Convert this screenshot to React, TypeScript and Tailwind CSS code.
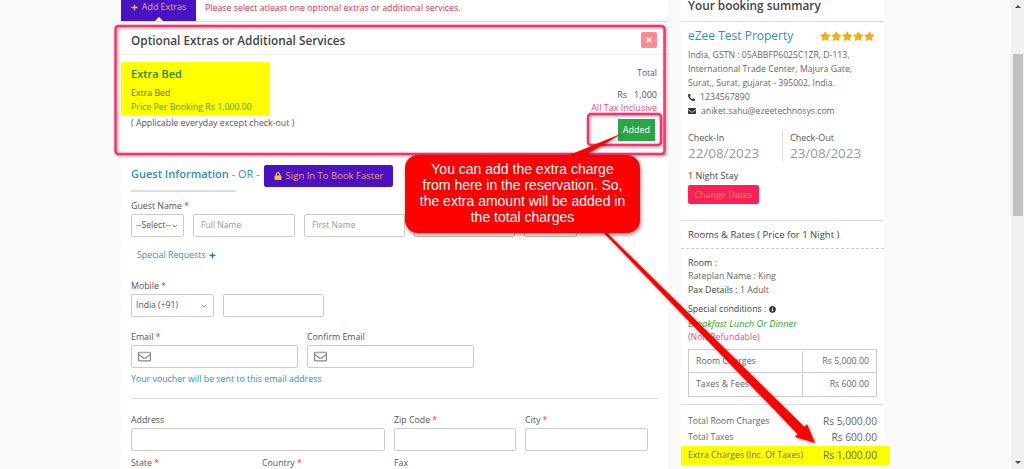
import { FaPlus, FaLock, FaTimes, FaRegEnvelope, FaEnvelope, FaPhoneAlt, FaInfoCircle, FaStar } from "react-icons/fa";
import { ChevronDown } from "lucide-react";

const Req = () => <span className="text-[#e33]"> *</span>;

function Label({ text, req }: { text: string; req?: boolean }) {
  return (
    <div className="h-[16px] whitespace-nowrap pt-[1px] text-[8.8px] leading-[14px] text-[#555]">
      {text}
      {req && <Req />}
    </div>
  );
}

function Field({ label, req, w, ph, icon }: { label?: string; req?: boolean; w: string; ph?: string; icon?: boolean }) {
  return (
    <div className={w}>
      {label && <Label text={label} req={req} />}
      <div className={`flex h-[23px] items-center rounded-[2px] border border-[#ccc] bg-white text-[8.6px] text-[#999] ${icon ? "px-[6px]" : "px-[7px]"}`}>
        {icon && <FaRegEnvelope size={13} className="text-[#888]" />}
        {ph}
      </div>
    </div>
  );
}

function Sel({ w, text }: { w: string; text: string }) {
  return (
    <div className={`${w} flex h-[23px] items-center justify-between whitespace-nowrap rounded-[2px] border border-[#ccc] bg-white pl-[4px] pr-[5px] text-[8.6px] text-[#555]`}>
      {text}
      <ChevronDown size={8} className="shrink-0 text-[#555]" />
    </div>
  );
}

function Row({ a, b, bg }: { a: string; b: string; bg?: boolean }) {
  return (
    <div className={`flex items-center justify-between pl-[7px] ${bg ? "h-[19px] w-[209px] bg-[#ffff00] pr-[13px]" : "h-[16px] pr-[7px]"}`}>
      <span className="whitespace-nowrap text-[8.7px] text-[#666]">{a}</span>
      <span className="whitespace-nowrap text-[10.2px] text-[#666]">{b}</span>
    </div>
  );
}

export default function App() {
  return (
    <div className="relative flex h-[469px] w-[1024px] overflow-hidden bg-[#fafafa] font-['Open_Sans',sans-serif] text-[#555]">
      <div className="ml-[121px] h-full w-[547px] bg-white">
        <div className="flex h-[22px] items-start border-b border-[#ddd]">
          <div className="relative flex h-[21px] w-[75px] items-center justify-center gap-[4px] bg-[#4a12c4] pb-[8px] pt-[1px] text-[8.9px] text-[#e9b25e]">
            <FaPlus size={7} className="text-[#f5c02e]" />
            Add Extras
            <span className="absolute bottom-0 left-[34px] h-0 w-0 border-x-[4px] border-b-[4px] border-x-transparent border-b-white" />
          </div>
          <div className="ml-[9px] pt-[2px] text-[8.8px] leading-[13px] text-[#d9304f]">
            Please select atleast one optional extras or additional services.
          </div>
        </div>

        <div className="mt-[4px] h-[128px]">
          <div className="flex h-[29px] items-center justify-between border-b border-[#eee] pl-[10px] pr-[11px]">
            <span className="mt-[1px] text-[11.8px] font-semibold text-[#444]">Optional Extras or Additional Services</span>
            <span className="flex h-[16px] w-[16px] items-center justify-center rounded-[2px] bg-[#ff8a8f]">
              <FaTimes size={8} className="text-white" />
            </span>
          </div>
          <div className="flex justify-between pr-[11px] pt-[7px]">
            <div>
              <div className="h-[53px] w-[149px] bg-[#ffff00] pl-[10px] pt-[4px]">
                <div className="text-[11px] font-semibold leading-[16px] text-[#1f8a00]">Extra Bed</div>
                <div className="mt-[4px] text-[8.8px] leading-[14px] text-[#6a6a00]">Extra Bed</div>
                <div className="text-[8.8px] leading-[15px] text-[#3fa300]">Price Per Booking Rs 1,000.00</div>
              </div>
              <div className="pl-[10px] pt-[1px] text-[8.8px] leading-[14px] text-[#555]">( Applicable everyday except check-out )</div>
            </div>
            <div className="flex flex-col items-end pt-[4px]">
              <div className="text-[8.5px] leading-[14px] text-[#555]">Total</div>
              <div className="mt-[8px] text-[9px] leading-[13px] text-[#555]">Rs &nbsp; 1,000</div>
              <div className="text-[9px] leading-[14px] text-[#f0506e]">All Tax Inclusive</div>
              <div className="mr-[2px] mt-[4px] flex h-[22px] w-[37px] items-center justify-center bg-[#28a745] text-[9px] text-white">Added</div>
            </div>
          </div>
        </div>

        <div className="border-t border-[#ddd] pl-[10px] pr-[10px]">
          <div className="flex h-[37px] items-start pt-[10px]">
            <div className="w-[133px] whitespace-nowrap pt-[1px] text-[11px] leading-[16px] text-[#2f8fc4]">
              <span className="font-semibold">Guest Information</span>
              <span> - OR -</span>
            </div>
            <div className="flex h-[22px] w-[129px] items-center justify-center gap-[4px] rounded-[2px] bg-[#4a12c4] text-[9.5px] text-[#e9a05e]">
              <FaLock size={8} className="text-[#f5c02e]" />
              Sign In To Book Faster
            </div>
          </div>
          <div className="-mt-[2px] h-[2px] w-[105px] bg-[#ddd]" />
          <div className="h-[20px] pt-[7px] text-[8.8px] leading-[14px] text-[#555]">
            Guest Name<Req />
          </div>
          <div className="mt-[2px] flex gap-[9px]">
            <Sel w="w-[53px]" text="--Select--" />
            <Field w="w-[102px]" ph="Full Name" />
            <Field w="w-[101px]" ph="First Name" />
            <Field w="w-[101px]" ph="Last Name" />
            <Field w="w-[53px]" />
          </div>
          <div className="flex h-[36px] items-center gap-[3px] pl-[6px] pt-[1px] text-[8.8px] text-[#2f8fc4]">
            Special Requests
            <FaPlus size={7} className="text-[#1a7fc0]" />
          </div>
          <div className="mt-[5px]">
            <Label text="Mobile" req />
          </div>
          <div className="flex gap-[9px]">
            <Sel w="w-[83px]" text="India (+91)" />
            <Field w="w-[101px]" />
          </div>
          <div className="mt-[12px] flex gap-[9px]">
            <Field w="w-[167px]" label="Email" req icon />
            <Field w="w-[167px]" label="Confirm Email" icon />
          </div>
          <div className="flex h-[22px] items-center pt-[2px] text-[8.8px] text-[#2f8fc4]">Your voucher will be sent to this email address</div>
          <div className="mt-[8px] h-[1px] bg-[#ddd]" />
          <div className="mt-[13px] flex gap-[9px]">
            <Field w="w-[254px]" label="Address" />
            <Field w="w-[122px]" label="Zip Code" req />
            <Field w="w-[123px]" label="City" req />
          </div>
          <div className="mt-[5px] flex text-[8.8px] leading-[14px] text-[#555]">
            <div className="w-[131px]">State<Req /></div>
            <div className="w-[132px]">Country<Req /></div>
            <div>Fax</div>
          </div>
        </div>
      </div>

      <div className="ml-[13px] h-full w-[203px] bg-white">
        <div className="h-[22px] border-b border-[#ddd] pl-[7px] text-[11.8px] font-semibold leading-[11px] text-[#444]">Your booking summary</div>
        <div className="h-[199px] border-b border-[#ddd] pl-[7px] pr-[10px] pt-[5px]">
          <div className="flex h-[17px] items-center justify-between">
            <span className="text-[12px] text-[#2f8fc4]">eZee Test Property</span>
            <span className="flex gap-[0.5px] pt-[2px]">
              {[0, 1, 2, 3, 4].map((i) => (
                <FaStar key={i} size={10.5} className="text-[#f5ad0c]" />
              ))}
            </span>
          </div>
          <div className="mt-[4px] text-[8.7px] leading-[14px] text-[#666]">
            <div className="whitespace-nowrap">India, GSTN : 05ABBFP6025C1ZR, D-113,</div>
            <div className="whitespace-nowrap">International Trade Center, Majura Gate,</div>
            <div className="whitespace-nowrap">Surat,, Surat, gujarat - 395002, India.</div>
            <div className="flex items-center gap-[5px]"><FaPhoneAlt size={7} className="text-[#333]" />1234567890</div>
            <div className="flex items-center gap-[5px]"><FaEnvelope size={8} className="text-[#333]" />aniket.sahu@ezeetechnosys.com</div>
          </div>
          <div className="mt-[13px] flex">
            <div className="w-[95px] border-r border-[#ddd]">
              <div className="text-[9px] leading-[14px] text-[#555]">Check-In</div>
              <div className="text-[13.4px] leading-[16px] text-[#999]">22/08/2023</div>
            </div>
            <div className="pl-[7px]">
              <div className="text-[9px] leading-[14px] text-[#555]">Check-Out</div>
              <div className="text-[13.4px] leading-[16px] text-[#999]">23/08/2023</div>
            </div>
          </div>
          <div className="mt-[8px] text-[9px] leading-[14px] text-[#444]">1 Night Stay</div>
          <div className="mt-[2px] flex h-[19px] w-[71px] items-center justify-center rounded-[2px] bg-[#ff1f58] text-[9px] text-[#f5a623]">Change Dates</div>
        </div>
        <div className="flex h-[28px] items-center border-b border-dashed border-[#ccc] pl-[7px] pt-[1px] text-[9.5px] text-[#444]">Rooms &amp; Rates ( Price for 1 Night )</div>
        <div className="h-[156px] border-b border-[#ddd] pl-[7px] pr-[7px] pt-[8px] text-[8.8px] text-[#666]">
          <div className="leading-[13px] text-[#444]">Room :</div>
          <div className="leading-[13px]">Rateplan Name : King</div>
          <div className="leading-[14px]"><span className="font-medium text-[#444]">Pax Details :</span> 1 Adult</div>
          <div className="mt-[5px] flex items-center gap-[3px] leading-[15px] text-[#444]">Special conditions : <FaInfoCircle size={7} className="text-[#333]" /></div>
          <div className="text-[9.3px] italic leading-[14px] text-[#2ca02c]">Breakfast Lunch Or Dinner</div>
          <div className="leading-[13px] text-[#f0506e]">(Non Refundable)</div>
          <div className="mt-[5px] border border-[#ccc]">
            <div className="flex h-[23px] items-center border-b border-[#ccc] pt-[1px]">
              <div className="flex h-full w-[114px] items-center border-r border-[#ccc] pl-[7px]">Room Charges</div>
              <div className="flex-1 pr-[7px] text-right">Rs 5,000.00</div>
            </div>
            <div className="flex h-[23px] items-center pt-[1px]">
              <div className="flex h-full w-[114px] items-center border-r border-[#ccc] pl-[7px]">Taxes &amp; Fees</div>
              <div className="flex-1 pr-[7px] text-right">Rs 600.00</div>
            </div>
          </div>
        </div>
        <div className="pt-[9px]">
          <Row a="Total Room Charges" b="Rs 5,000.00" />
          <Row a="Total Taxes" b="Rs 600.00" />
          <Row a="Extra Charges (Inc. Of Taxes)" b="Rs 1,000.00" bg />
        </div>
      </div>

      <div className="ml-auto flex h-full w-[13px] flex-col items-center bg-[#f1f1f1]">
        <div className="mt-[5px] h-0 w-0 border-x-[3px] border-b-[3px] border-x-transparent border-b-[#505050]" />
        <div className="ml-[1px] mt-[46px] h-[162px] w-[10px] bg-[#c1c1c1]" />
        <div className="mb-[5px] mt-auto h-0 w-0 border-x-[3px] border-t-[3px] border-x-transparent border-t-[#505050]" />
      </div>

      <svg className="pointer-events-none absolute left-0 top-0" width="1024" height="469" viewBox="0 0 1024 469">
        <defs>
          <filter id="s" x="-20%" y="-20%" width="140%" height="140%">
            <feDropShadow dx="1" dy="1" stdDeviation="1.5" floodColor="#000" floodOpacity="0.4" />
          </filter>
        </defs>
        <g filter="url(#s)" fill="none" stroke="#f5306e" strokeWidth="2.4">
          <rect x="115.5" y="26" width="549" height="128" rx="3" />
          <rect x="588" y="114" width="73" height="31" rx="3" />
        </g>
        <g filter="url(#s)" fill="#ff0000">
          <path d="M567 156 L623 133 L584 156 Z" />
          <path d="M602 231 L605 231 L804.5 427 L807 424 L815 443 L795 437 L797.5 434 Z" />
        </g>
      </svg>
      <div className="absolute left-[405px] top-[155px] flex h-[78px] w-[235px] items-center justify-center rounded-[13px] bg-[#ff0000] pb-[3px] text-center font-['Liberation_Sans',sans-serif] text-[14px] leading-[16px] text-white shadow-[1px_2px_4px_rgba(0,0,0,0.45)]">
        <div>
          You can add the extra charge<br />from here in the reservation. So,<br />the extra amount will be added in<br />the total charges
        </div>
      </div>
    </div>
  );
}
